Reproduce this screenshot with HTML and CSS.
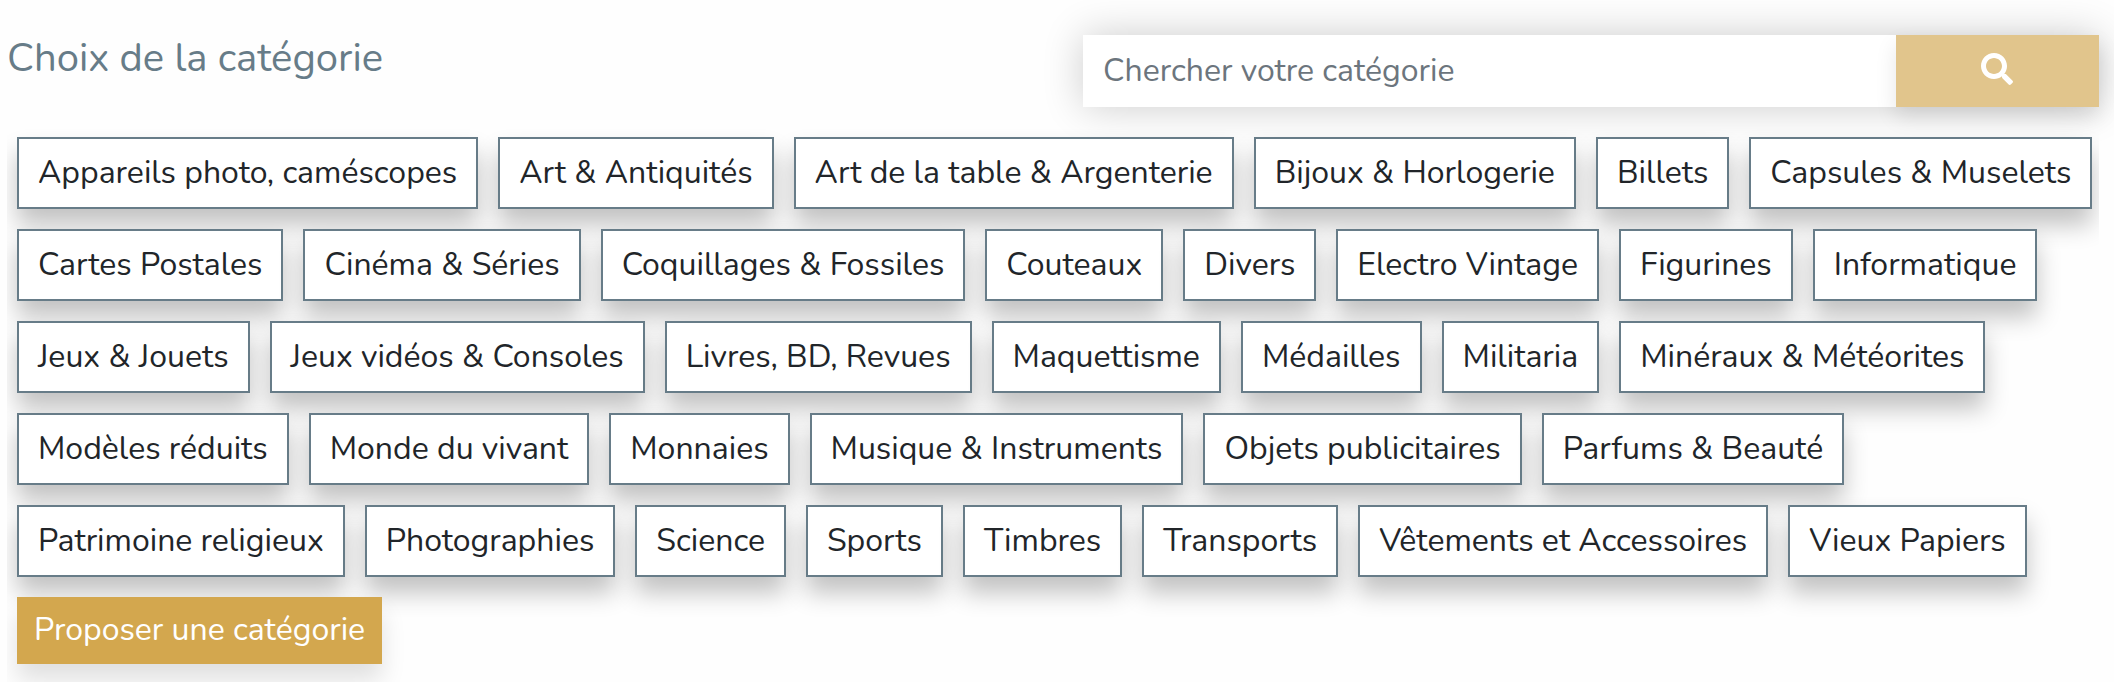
FILE: index.html
```html
<!DOCTYPE html>
<html lang="fr">
<head>
    <meta charset="UTF-8">
    <meta name="viewport" content="width=device-width, initial-scale=1.0">
    <title>Choix de la catégorie</title>
    <link rel="stylesheet" href="styles.css">
</head>
<body>
    <div class="category-header">
        <h1 class="category-title">Choix de la catégorie</h1>
        <form class="search-form" role="search">
            <input class="search-input" type="search" name="q" placeholder="Chercher votre catégorie" aria-label="Chercher votre catégorie">
            <button class="search-button" type="submit" aria-label="Chercher">
                <svg class="search-icon" viewBox="0 0 512 512" aria-hidden="true">
                    <path fill="currentColor" d="M505 442.700L405.300 343c-4.500-4.500-10.600-7-17-7H372c27.600-35.300 44-79.700 44-128C416 93.100 322.900 0 208 0S0 93.100 0 208s93.100 208 208 208c48.300 0 92.700-16.400 128-44v16.300c0 6.400 2.500 12.500 7 17l99.700 99.700c9.400 9.400 24.600 9.400 33.900 0l28.300-28.300c9.400-9.400 9.400-24.600.1-34zM208 336c-70.700 0-128-57.200-128-128 0-70.700 57.200-128 128-128 70.700 0 128 57.200 128 128 0 70.700-57.200 128-128 128z"/>
                </svg>
            </button>
        </form>
    </div>
    <div class="category-list">
        <a class="category" href="#">Appareils photo, caméscopes</a>
        <a class="category" href="#">Art &amp; Antiquités</a>
        <a class="category" href="#">Art de la table &amp; Argenterie</a>
        <a class="category" href="#">Bijoux &amp; Horlogerie</a>
        <a class="category" href="#">Billets</a>
        <a class="category" href="#">Capsules &amp; Muselets</a>
        <a class="category" href="#">Cartes Postales</a>
        <a class="category" href="#">Cinéma &amp; Séries</a>
        <a class="category" href="#">Coquillages &amp; Fossiles</a>
        <a class="category" href="#">Couteaux</a>
        <a class="category" href="#">Divers</a>
        <a class="category" href="#">Electro Vintage</a>
        <a class="category" href="#">Figurines</a>
        <a class="category" href="#">Informatique</a>
        <a class="category" href="#">Jeux &amp; Jouets</a>
        <a class="category" href="#">Jeux vidéos &amp; Consoles</a>
        <a class="category" href="#">Livres, BD, Revues</a>
        <a class="category" href="#">Maquettisme</a>
        <a class="category" href="#">Médailles</a>
        <a class="category" href="#">Militaria</a>
        <a class="category" href="#">Minéraux &amp; Météorites</a>
        <a class="category" href="#">Modèles réduits</a>
        <a class="category" href="#">Monde du vivant</a>
        <a class="category" href="#">Monnaies</a>
        <a class="category" href="#">Musique &amp; Instruments</a>
        <a class="category" href="#">Objets publicitaires</a>
        <a class="category" href="#">Parfums &amp; Beauté</a>
        <a class="category" href="#">Patrimoine religieux</a>
        <a class="category" href="#">Photographies</a>
        <a class="category" href="#">Science</a>
        <a class="category" href="#">Sports</a>
        <a class="category" href="#">Timbres</a>
        <a class="category" href="#">Transports</a>
        <a class="category" href="#">Vêtements et Accessoires</a>
        <a class="category" href="#">Vieux Papiers</a>
        <button class="propose-button" type="button">Proposer une catégorie</button>
    </div>
</body>
</html>
```

FILE: styles.css
```css
* {
    box-sizing: border-box;
}
body {
    margin: 0;
    padding: 35px 15px 0 7px;
    font-family: Nunito, Lato, sans-serif;
    font-size: 32px;
    line-height: 48px;
    color: #212529;
    background-color: #fefefe;
}
.category-header {
    display: grid;
    grid-template-columns: 1fr 1fr;
    gap: 60px;
}
.category-title {
    margin: 0;
    font-size: 40px;
    line-height: 46px;
    font-weight: 400;
    color: #677c88;
}
.search-form {
    display: flex;
    box-shadow: 0 0 40px rgba(0, 0, 0, 0.2);
}
.search-input {
    width: 80%;
    height: 72px;
    padding: 0 20px 2px;
    border: none;
    font: inherit;
    color: #495057;
    background-color: #fff;
}
.search-input::placeholder {
    color: #6c757d;
    opacity: 1;
}
.search-button {
    width: 20%;
    padding: 0 0 4px;
    border: none;
    color: #fff;
    background-color: #e1c58c;
    box-shadow: 0 10px 20px rgba(0, 0, 0, 0.1);
    cursor: pointer;
}
.search-icon {
    display: block;
    width: 32px;
    height: 32px;
    margin: 0 auto;
}
.category-list {
    display: flex;
    flex-wrap: wrap;
    align-items: flex-start;
    gap: 20px;
    margin-top: 30px;
    padding: 0 0 18px 10px;
    overflow-x: clip;
}
.category {
    padding: 10px 19px;
    border: 2px solid #677c88;
    color: inherit;
    text-decoration: none;
    background-color: #fff;
    box-shadow: 0 16px 24px rgba(0, 0, 0, 0.24);
}
.propose-button {
    height: 67px;
    padding: 0 17px 2px;
    border: none;
    font: inherit;
    color: #fff;
    background-color: #d3a74e;
    box-shadow: 0 16px 24px rgba(0, 0, 0, 0.12);
    cursor: pointer;
}
```
